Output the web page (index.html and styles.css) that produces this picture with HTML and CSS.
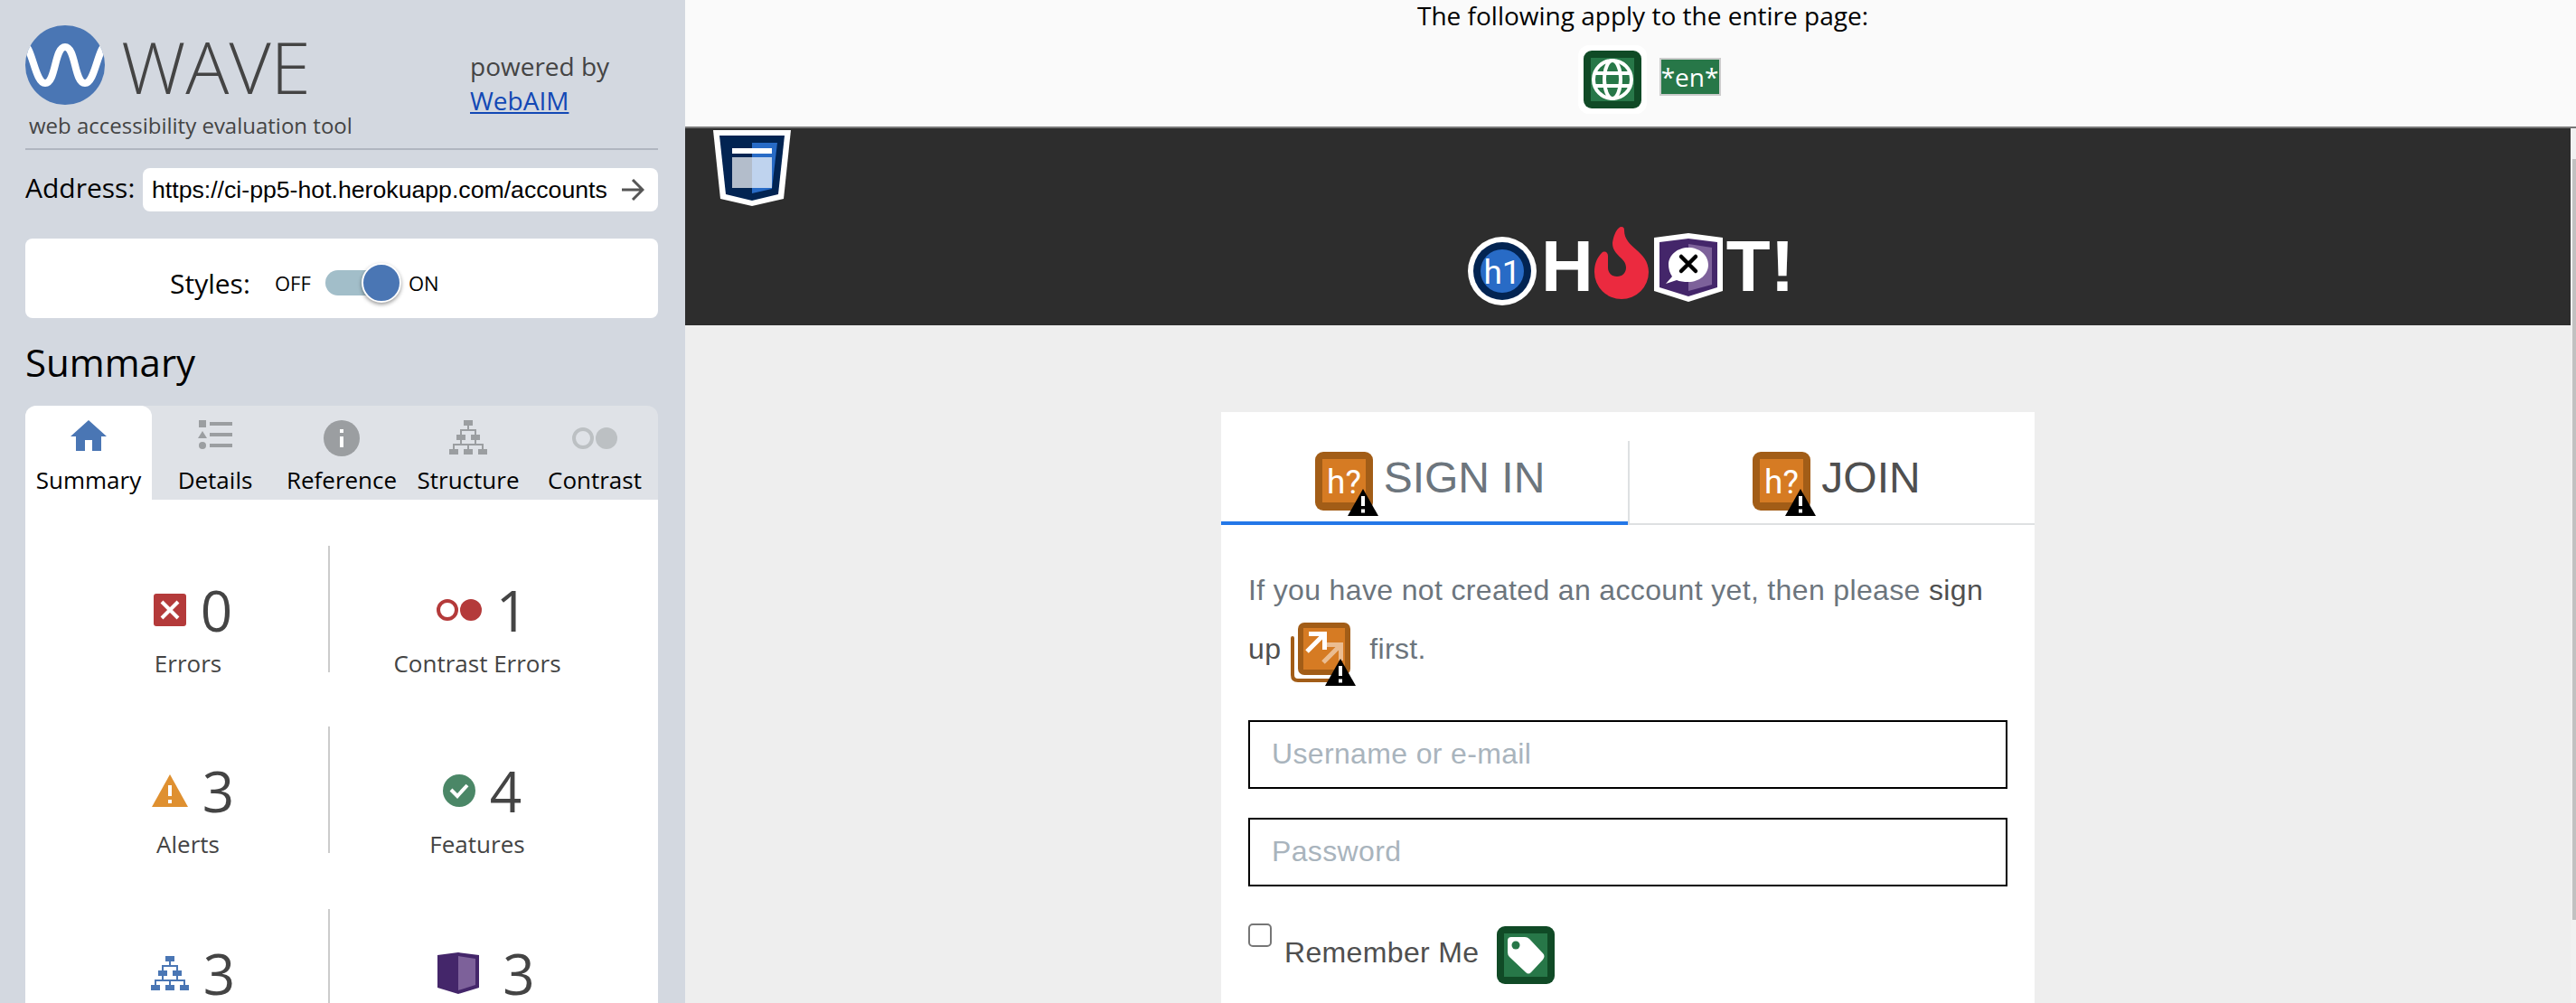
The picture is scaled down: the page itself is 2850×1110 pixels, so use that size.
FILE: index.html
```html
<!DOCTYPE html>
<html lang="en">
<head>
<meta charset="utf-8">
<title>WAVE Report</title>
<link rel="stylesheet" href="styles.css">
</head>
<body>
<svg width="0" height="0" class="defs" aria-hidden="true">
  <defs>
    <symbol id="tree" viewBox="0 0 42 38">
      <path d="M16 0h10v6h-10zM8 16h10v6H8zM24 16h10v6H24zM0 32h10v6H0zM16 32h10v6h-10zM32 32h10v6H32z" fill="currentColor"/>
      <path d="M21 5v6M13 17v-6h16v6M13 21v6M29 21v6M5 33v-6h32v6M21 27v6" fill="none" stroke="currentColor" stroke-width="2"/>
    </symbol>
    <symbol id="pair" viewBox="0 0 50 24">
      <circle cx="12" cy="12" r="10" fill="none" stroke="currentColor" stroke-width="4"/>
      <circle cx="38" cy="12" r="12" fill="currentColor"/>
    </symbol>
    <symbol id="warn" viewBox="0 0 34 30">
      <path d="M17 0L34 30H0z" fill="#000"/><path d="M15 8h4v11h-4zM15 22.500h4v4h-4z" fill="#fff"/>
    </symbol>
  </defs>
</svg>
<div class="app">
  <aside class="sidebar">
    <header class="brand">
      <div class="brand-main">
        <div class="brand-row">
          <svg class="logo" viewBox="0 0 88 88"><defs><clipPath id="disc"><circle cx="44" cy="44" r="44"/></clipPath></defs><circle cx="44" cy="44" r="44" fill="#4a76b4"/><path clip-path="url(#disc)" d="M-4 20C8 20 10 64 22 64S32 24 44 24S54 64 66 64S80 20 92 20" fill="none" stroke="#fff" stroke-width="8"/></svg>
          <span class="brand-name">WAVE</span>
        </div>
        <div class="tagline">web accessibility evaluation tool</div>
      </div>
      <div class="powered">powered by<br><a>WebAIM</a></div>
    </header>
    <div class="address"><label>Address:</label><div class="address-box"><span>https://ci-pp5-hot.herokuapp.com/accounts</span><svg width="26" height="24" viewBox="0 0 26 24"><path d="M1 12h22M13 1l11 11-11 11" fill="none" stroke="#555" stroke-width="3"/></svg></div></div>
    <div class="styles-card"><span class="styles-label">Styles:</span><span class="off">OFF</span><span class="track"><span class="knob"></span></span><span class="on">ON</span></div>
    <h2>Summary</h2>
    <nav class="tabs">
      <div class="tab active"><svg width="40" height="60" viewBox="0 0 40 60"><path d="M20 16L40 34h-6v16H24V38h-8v12H6V34H0z" fill="#4a76b4"/></svg><span>Summary</span></div>
      <div class="tab"><svg width="38" height="60" viewBox="0 0 38 60"><path d="M1 16h8v8H1zM5 28l5 8H0zM13 18h25v4H13zM13 30h25v4H13zM13 42h25v4H13z"/><circle cx="5" cy="44" r="4"/></svg><span>Details</span></div>
      <div class="tab"><svg width="40" height="60" viewBox="0 0 40 60"><circle cx="20" cy="36" r="20"/><path d="M18 26h4v4h-4zM18 34h4v12h-4z" fill="#fff"/></svg><span>Reference</span></div>
      <div class="tab"><svg width="42" height="60" viewBox="0 0 42 60"><use href="#tree" y="16" width="42" height="38"/></svg><span>Structure</span></div>
      <div class="tab contrast"><svg width="50" height="60" viewBox="0 0 50 60"><use href="#pair" y="24" width="50" height="24"/></svg><span>Contrast</span></div>
    </nav>
    <section class="counts">
      <div class="count left"><div class="value"><svg width="36" height="36" viewBox="0 0 36 36"><rect width="36" height="36" rx="3" fill="#b43a3a"/><path d="M9 9l18 18M27 9L9 27" stroke="#fff" stroke-width="4"/></svg><b>0</b></div><p>Errors</p></div>
      <div class="count"><div class="value"><svg class="red" width="50" height="24"><use href="#pair"/></svg><b>1</b></div><p>Contrast Errors</p></div>
      <div class="count left"><div class="value"><svg width="40" height="36" viewBox="0 0 40 36"><path d="M20 0l20 36H0z" fill="#df9030"/><path d="M18 12h4v12h-4zM18 28h4v4h-4z" fill="#fff"/></svg><b>3</b></div><p>Alerts</p></div>
      <div class="count"><div class="value"><svg width="36" height="36" viewBox="0 0 36 36"><circle cx="18" cy="18" r="18" fill="#4b8767"/><path d="M9 17l7 7L27 12" fill="none" stroke="#fff" stroke-width="4"/></svg><b>4</b></div><p>Features</p></div>
      <div class="count left last"><div class="value"><svg class="blue" width="42" height="38"><use href="#tree"/></svg><b>3</b></div></div>
      <div class="count last"><div class="value wide"><svg width="46" height="46" viewBox="0 0 46 46"><path d="M0 3L23 0L46 3v36L23 46L0 39z" fill="#44266a"/><path d="M23 4l19 3v29l-19 6z" fill="#7d619a"/></svg><b>3</b></div></div>
    </section>
  </aside>
  <main class="report">
    <section class="page-wide">
      <div>The following apply to the entire page:</div>
      <div class="page-icons">
        <svg width="76" height="80" viewBox="-6 -6 76 76" preserveAspectRatio="xMidYMid meet"><rect x="-6" y="-6" width="76" height="76" rx="12" fill="#fff"/><rect width="64" height="64" rx="9" fill="#104a26"/><rect x="8" y="8" width="48" height="48" fill="#277748"/><g fill="none" stroke="#fff" stroke-width="4"><circle cx="32" cy="32" r="21"/><ellipse cx="32" cy="32" rx="9" ry="21"/><path d="M12 25h40M12 39h40"/></g></svg>
        <span class="lang">*en*</span>
      </div>
    </section>
    <div class="viewport">
      <div class="site">
        <header class="site-header">
          <svg width="86" height="84" viewBox="0 0 86 84"><path d="M0 0h86l-8 76-35 8-35-8z" fill="#fff"/><path d="M7 6h72l-7 65-29 7-29-7z" fill="#022452"/><path d="M43 14h28l-6 51-22 5z" fill="#286bc6"/><path d="M21 20h44v6H21z" fill="#fff"/><path d="M21 30h44v34H21z" fill="#fff" opacity=".7"/></svg>
          <div class="hot">
            <svg width="76" height="76" viewBox="0 0 76 76"><circle cx="38" cy="38" r="38" fill="#fff"/><circle cx="38" cy="38" r="32" fill="#022452"/><circle cx="38" cy="38" r="24" fill="#286bc6"/><text x="38" y="52" class="glyph">h1</text></svg>
            <span class="h">H</span>
            <svg class="flame" width="60" height="80" viewBox="0 0 60 80"><path d="M30 0c2 0 3 1 3 4c0 20 27 22 27 46a30 30 0 0 1-60 0C0 41 3 34 8 29c3-3 7-1 7 3v13c0 6 4 10 10 10s10-4 10-10C35 34 20 32 20 18C21 10 25 0 30 0z" fill="#eb2a3f"/></svg>
            <svg class="aria" width="76" height="76" viewBox="0 0 76 76"><path d="M0 5L38 0l38 5v59L38 76L0 64z" fill="#fff"/><path d="M6 10l32-4 32 4v50L38 70 6 60z" fill="#44266a"/><path d="M38 12l26 4v41l-26 7z" fill="#7d619a"/><path d="M38 16c12 0 22 8 22 19s-10 19-22 19q-8 0-13-2L13 56l7-8q-4-6-4-13c0-11 10-19 22-19z" fill="#fff"/><path d="M30 26l16 16M46 26L30 42" stroke="#000" stroke-width="4.500" stroke-linecap="round"/></svg>
            <span>T!</span>
          </div>
        </header>
        <section class="card">
          <div class="auth-tabs">
            <div class="auth-tab current"><svg width="70" height="71" viewBox="0 0 70 71"><rect width="64" height="65" rx="9" fill="#a25d17"/><rect x="8" y="8" width="48" height="48" fill="#d67b23"/><text x="32" y="46" class="glyph">h?</text><use href="#warn" x="36" y="41" width="34" height="30"/></svg><span>SIGN IN</span></div>
            <div class="auth-tab"><svg width="70" height="71" viewBox="0 0 70 71"><rect width="64" height="65" rx="9" fill="#a25d17"/><rect x="8" y="8" width="48" height="48" fill="#d67b23"/><text x="32" y="46" class="glyph">h?</text><use href="#warn" x="36" y="41" width="34" height="30"/></svg><span>JOIN</span></div>
          </div>
          <div class="card-body">
            <p class="intro">If you have not created an account yet, then please <a>sign<br>up</a><svg width="72" height="70" viewBox="0 0 72 70"><path d="M2 17v41q0 6 6 6H50" fill="none" stroke="#a25d17" stroke-width="4" stroke-linecap="round"/><rect x="8" width="58" height="58" rx="7" fill="#a25d17"/><rect x="14" y="6" width="46" height="46" fill="#d67b23"/><g fill="none" stroke="#fff" stroke-width="5"><path d="M18 32L37 13M20 12.500h17.500V30"/><path opacity=".5" d="M36 44L54 26M40 24.500h15.500V42"/></g><use href="#warn" x="38" y="40" width="34" height="30"/></svg><span>first.</span></p>
            <div class="field">Username or e-mail</div>
            <div class="field">Password</div>
            <div class="remember"><span class="box"></span><span>Remember Me</span><svg width="64" height="64" viewBox="0 0 64 64"><rect width="64" height="64" rx="9" fill="#104a26"/><rect x="8" y="8" width="48" height="48" fill="#277748"/><path d="M16 12h15q3 0 5 2l15 16q3 3 0 7L38 51q-3 3-6 0L14 34q-2-2-2-5V16q0-4 4-4z" fill="#fff"/><circle cx="21" cy="21" r="4.500" fill="#277748"/></svg></div>
          </div>
        </section>
      </div>
      <div class="scrollbar"><span></span></div>
    </div>
  </main>
</div>
</body>
</html>
```
FILE: styles.css
```css
* { box-sizing: border-box; }
body { margin: 0; font-family: "Open Sans", sans-serif; color: #000; }
svg { display: block; flex: none; }
p, h2 { margin: 0; }
.defs { position: absolute; }
.app { display: flex; height: 1110px; overflow: hidden; }

.sidebar { width: 758px; flex: none; background: #d3d8e0; padding: 28px 30px 0 28px; }
.brand { display: flex; height: 138px; border-bottom: 2px solid #b0b6c0; color: #444; }
.brand-main { width: 492px; }
.brand-row { display: flex; gap: 18px; height: 88px; }
.logo { width: 88px; height: 88px; }
.brand-name { font-size: 80px; font-weight: 300; line-height: 90px; }
.tagline { font-size: 24px; line-height: 32px; margin: 7px 0 0 4px; white-space: nowrap; }
.powered { font-size: 28px; line-height: 38px; padding-top: 26px; }
.powered a { color: #1248b5; text-decoration: underline; }
.address { display: flex; margin-top: 20px; height: 48px; font-size: 30px; line-height: 43px; }
.address label { width: 130px; flex: none; }
.address-box { flex: 1; display: flex; align-items: center; justify-content: space-between; background: #fff; border-radius: 8px; padding: 0 15px 0 10px; }
.address-box span { font: 26.67px "Liberation Sans", sans-serif; white-space: nowrap; }
.styles-card { display: flex; align-items: center; height: 88px; margin-top: 30px; padding: 10px 0 0 160px; background: #fff; border-radius: 8px; }
.styles-label { font-size: 30px; width: 116px; }
.off { font-size: 22px; width: 56px; }
.track { width: 84px; height: 28px; border-radius: 14px; background: #a2bec9; display: flex; justify-content: flex-end; align-items: center; }
.knob { width: 44px; height: 44px; border-radius: 50%; background: #4a76b4; border: 2px solid #fff; box-shadow: 0 2px 4px rgba(0,0,0,.4); }
.on { font-size: 22px; margin-left: 8px; }
h2 { font-size: 42px; font-weight: 400; line-height: 56px; margin-top: 21px; }
.tabs { display: flex; height: 104px; margin-top: 20px; background: #dfe2e7; border-radius: 12px 12px 0 0; }
.tab { width: 140px; display: flex; flex-direction: column; align-items: center; font-size: 26px; line-height: 34px; color: #9b9ea1; fill: #9b9ea1; border-radius: 12px 12px 0 0; }
.tab span { color: #000; margin-top: 5px; }
.tab.active { background: #fff; }
.tab.contrast { color: #bcc0c3; }
.counts { background: #fff; display: grid; grid-template-columns: 312px 326px; grid-auto-rows: 140px; row-gap: 60px; padding: 51px 37px 0 25px; height: 560px; color: #444; overflow: hidden; }
.count { display: flex; flex-direction: column; align-items: center; padding-top: 36px; }
.count.left { border-right: 2px solid #ccc; }
.count.last { margin-top: 2px; }
.value { display: flex; align-items: center; height: 70px; gap: 16px; padding-left: 11px; }
.value.wide { gap: 26px; padding-left: 20px; }
.value b { font-size: 62px; font-weight: 400; line-height: 70px; }
.red { color: #b43a3a; }
.blue { color: #4a76b4; }
.count p { font-size: 26px; line-height: 34px; margin-top: 7px; }

.report { flex: 1; display: flex; flex-direction: column; }
.page-wide { flex: none; height: 142px; background: #fafafa; border-bottom: 2px solid #777; text-align: center; font-size: 28px; line-height: 34px; padding-left: 27px; }
.page-icons { display: flex; justify-content: center; align-items: center; gap: 14px; margin-top: 14px; padding-left: 14px; }
.lang { background: #277748; color: #fff; border: 2px solid #ccc; width: 68px; height: 42px; line-height: 38px; margin-top: -6px; }
.viewport { flex: 1; display: flex; min-height: 0; }
.site { flex: 1; background: #eee; font-family: "Liberation Sans", sans-serif; }
.site-header { height: 218px; background: #2d2d2d; padding: 2px 0 0 31px; }
.hot { display: flex; align-items: flex-start; margin: 22px 0 0 835px; color: #fff; font-size: 80px; font-weight: 700; line-height: 90px; }
.hot > :first-child { margin-top: 12px; }
.hot .h { margin: 0 1px 0 5px; }
.hot .flame { margin-top: 1px; }
.hot .aria { margin: 8px 4px 0 6px; }
.glyph { font: 37px Roboto, sans-serif; fill: #fff; text-anchor: middle; }
.card { width: 900px; height: 700px; margin: 96px 0 0 593px; background: #fff; padding-top: 32px; }
.auth-tabs { display: flex; height: 93px; font-size: 48px; }
.auth-tab { width: 450px; flex: none; display: flex; justify-content: center; padding: 12px 0 0 12px; line-height: 58px; color: #4f4f4f; border-bottom: 2px solid #dee0e2; }
.auth-tab.current { color: #6c757d; border-bottom: 4px solid #2377e8; }
.auth-tab + .auth-tab { border-left: 2px solid #dee0e2; padding-left: 10px; }
.auth-tab span { margin-left: 6px; }
.card-body { padding: 0 30px; font-size: 32px; letter-spacing: .35px; color: #6c757d; }
.intro { height: 216px; padding-top: 40px; line-height: 65px; white-space: nowrap; }
.intro a { color: #4f4f4f; }
.intro svg { display: inline-block; vertical-align: -30px; margin: -20px 15px 0 11px; }
.field { height: 76px; border: 2px solid #000; padding-left: 24px; line-height: 70px; margin-bottom: 32px; color: #a9b4bd; }
.remember { display: flex; padding-top: 12px; color: #4f4f4f; line-height: 58px; }
.box { width: 26px; height: 26px; margin: -3px 14px 0 0; border: 2px solid #767676; border-radius: 5px; }
.remember svg { margin-left: 20px; }
.scrollbar { width: 6px; background: #f1f1f1; padding: 34px 0 0 2px; }
.scrollbar span { display: block; height: 842px; background: #c1c1c1; }
```
